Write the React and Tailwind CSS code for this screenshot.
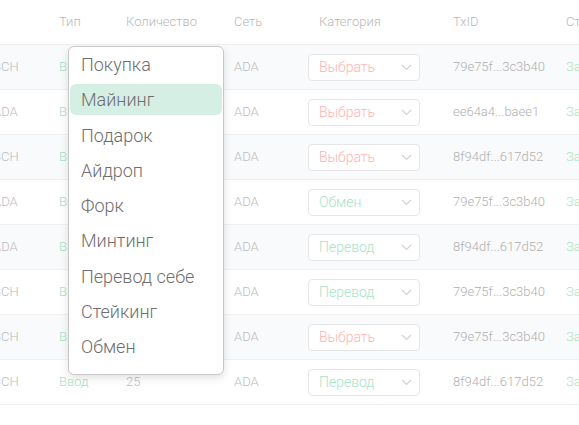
import React from "react";

const rows = [
  { coin: "BCH", type: "Ввод", qty: "25", net: "ADA", cat: null, tx: "79e75f...3c3b40", bg: true },
  { coin: "ADA", type: "Ввод", qty: "10", net: "ADA", cat: null, tx: "ee64a4...baee1", bg: false },
  { coin: "BCH", type: "Ввод", qty: "25", net: "ADA", cat: null, tx: "8f94df...617d52", bg: true },
  { coin: "ADA", type: "Ввод", qty: "10", net: "ADA", cat: "Обмен", tx: "79e75f...3c3b40", bg: false },
  { coin: "ADA", type: "Ввод", qty: "25", net: "ADA", cat: "Перевод", tx: "8f94df...617d52", bg: true },
  { coin: "BCH", type: "Ввод", qty: "25", net: "ADA", cat: "Перевод", tx: "79e75f...3c3b40", bg: false },
  { coin: "BCH", type: "Ввод", qty: "25", net: "ADA", cat: null, tx: "79e75f...3c3b40", bg: true },
  { coin: "BCH", type: "Ввод", qty: "25", net: "ADA", cat: "Перевод", tx: "8f94df...617d52", bg: false },
];

const menuItems = [
  "Покупка",
  "Майнинг",
  "Подарок",
  "Айдроп",
  "Форк",
  "Минтинг",
  "Перевод себе",
  "Стейкинг",
  "Обмен",
];

const Chevron = () => (
  <svg width="11" height="7" viewBox="0 0 11 7" fill="none">
    <path d="M1 1l4.5 4.5L10 1" stroke="#d2d2d2" strokeWidth="1.2" />
  </svg>
);

const CategorySelect = ({ value }) => (
  <div className="flex items-center justify-between w-[112px] h-[27px] border border-[#e6e6e6] rounded-[4px] bg-white pl-[10px] pr-[7px]">
    <span
      className={`text-[14px] ${value ? "text-[#a6e3c8]" : "text-[#ffb3b3]"}`}
    >
      {value || "Выбрать"}
    </span>
    <Chevron />
  </div>
);

const App = () => {
  return (
    <div
      className="relative w-[579px] h-[425px] overflow-hidden bg-white font-light"
      style={{ fontFamily: "Roboto, 'Noto Sans', sans-serif" }}
    >
      <div className="ml-[-7px] w-[700px]">
        {/* Header */}
        <div className="flex items-center h-[45px] border-b border-[#f0f0f0] text-[13px] text-[#b8b8b8]">
          <div className="w-[66px]"></div>
          <div className="w-[67px]">Тип</div>
          <div className="w-[108px]">Количество</div>
          <div className="w-[74px]">Сеть</div>
          <div className="w-[145px] pl-[11px]">Категория</div>
          <div className="w-[113px]">TxID</div>
          <div>Статус</div>
        </div>

        {/* Rows */}
        {rows.map((r, i) => (
          <div
            key={i}
            className={`flex items-center h-[45px] border-b border-[#f0f0f0] text-[13px] ${
              r.bg ? "bg-[#f9fafb]" : "bg-white"
            }`}
          >
            <div className="w-[66px] text-[#bdbdbd]">{r.coin}</div>
            <div className="w-[67px] text-[#a6e3c8]">{r.type}</div>
            <div className="w-[108px] text-[#bdbdbd]">{r.qty}</div>
            <div className="w-[74px] text-[#bdbdbd]">{r.net}</div>
            <div className="w-[145px]">
              <CategorySelect value={r.cat} />
            </div>
            <div className="w-[113px] text-[#b0b0b0]">{r.tx}</div>
            <div className="text-[#a6e3c8]">Завершено</div>
          </div>
        ))}
      </div>

      {/* Dropdown menu */}
      <div className="absolute left-[68px] top-[46px] w-[156px] flex flex-col gap-[4.25px] bg-white border border-[#c8c8c8] rounded-[6px] shadow-[0_3px_8px_rgba(0,0,0,0.12)] px-[1px] pt-[2px] pb-[12px]">
        {menuItems.map((item, i) => (
          <div
            key={item}
            className={`flex items-center h-[31px] pl-[11px] rounded-[6px] text-[18px] text-[#6e6e6e] ${
              i === 1 ? "bg-[#d6efe5]" : ""
            }`}
          >
            {item}
          </div>
        ))}
      </div>
    </div>
  );
};

export default App;
